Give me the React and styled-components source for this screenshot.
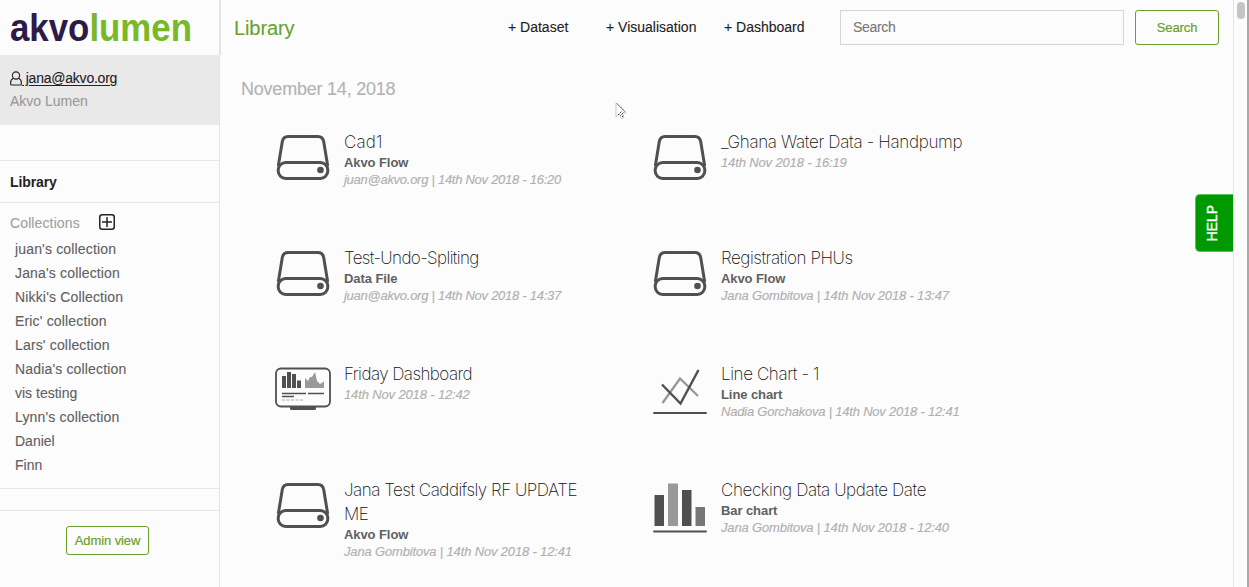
import React from "react";
import styled, { createGlobalStyle } from "styled-components";

const green = "#69a12e";

const GlobalStyle = createGlobalStyle`
  * { box-sizing: border-box; }
  html, body { margin: 0; padding: 0; overflow: hidden; background: #fcfcfc; }
  body { font-family: "Liberation Sans", Arial, sans-serif; font-size: 14px; color: #222; }
  button, input { font-family: inherit; }
`;

const Page = styled.div`
  position: relative;
  display: flex;
  width: 1249px;
  height: 587px;
  overflow: hidden;
  background: #fcfcfc;
`;

const Sidebar = styled.aside`
  display: flex;
  flex-direction: column;
  width: 220px;
  border-right: 1px solid #e4e4e4;
`;

const LogoArea = styled.div`
  height: 55px;
`;

const UserPanel = styled.div`
  height: 70px;
  padding: 12px 10px 0;
  background: #e9e9e9;
  line-height: 23px;
`;

const UserLink = styled.a`
  display: flex;
  align-items: center;
  height: 23px;
  color: #222;
  letter-spacing: -0.22px;
  -webkit-text-stroke: 0.1px;
`;

const UserName = styled.span`
  text-decoration: underline;
  text-underline-offset: 2px;
  white-space: pre;
`;

const Organisation = styled.div`
  color: #999;
  -webkit-text-stroke: 0.1px;
`;

const LibraryRow = styled.div`
  height: 43px;
  margin-top: 35px;
  padding-left: 10px;
  border-top: 1px solid #e6e6e6;
  border-bottom: 1px solid #e6e6e6;
  font-weight: bold;
  letter-spacing: -0.1px;
  line-height: 42px;
`;

const CollectionSection = styled.section`
  height: 286px;
  padding: 6px 10px 0;
  border-bottom: 1px solid #e6e6e6;
`;

const CollectionHeading = styled.div`
  display: flex;
  align-items: center;
  gap: 19px;
  height: 26px;
  margin-bottom: 2px;
  color: #a0a0a0;
  letter-spacing: 0.12px;
  -webkit-text-stroke: 0.1px;
`;

const HeadingLabel = styled.span`
  padding-top: 2px;
`;

const CollectionList = styled.ul`
  margin: 0;
  padding: 0 0 0 5px;
  list-style: none;
`;

const CollectionItem = styled.li`
  height: 24px;
  line-height: 24px;
  color: #606060;
  letter-spacing: ${(p) => (p.$short ? 0 : 0.16)}px;
  -webkit-text-stroke: 0.1px;
`;

const AdminArea = styled.div`
  flex: 1;
  margin-top: 21px;
  padding: 15px 0 0 66px;
  border-top: 1px solid #e6e6e6;
`;

const OutlineButton = styled.button`
  width: ${(p) => p.$width}px;
  height: ${(p) => p.$height}px;
  padding: 0;
  border: 1px solid ${green};
  border-radius: 3px;
  background: #fcfcfc;
  color: ${green};
  font-size: 13px;
  letter-spacing: -0.1px;
  white-space: nowrap;
  -webkit-text-stroke: 0.2px;
`;

const Main = styled.main`
  flex: 1;
  min-width: 0;
`;

const Header = styled.header`
  display: flex;
  align-items: center;
  height: 55px;
  padding-left: 13px;
  border-left: 1px solid #e4e4e4;
`;

const PageTitle = styled.h1`
  width: 274px;
  margin: 0;
  padding-top: 1px;
  color: ${green};
  font-size: 20px;
  font-weight: normal;
  letter-spacing: -0.1px;
  -webkit-text-stroke: 0.1px;
`;

const CreateLinks = styled.nav`
  display: flex;
  width: 332px;
  padding-bottom: 2px;
`;

const CreateLink = styled.a`
  width: ${(p) => p.$width}px;
  white-space: nowrap;
  -webkit-text-stroke: 0.1px;
`;

const SearchInput = styled.input`
  width: 284px;
  height: 35px;
  margin-right: 11px;
  padding: 0 12px 2px;
  border: 1px solid #d5d5d5;
  background: #fcfcfc;
  font-size: 14px;
  letter-spacing: -0.3px;
  outline: none;
  &::placeholder { color: #777; opacity: 1; -webkit-text-stroke: 0.1px; }
`;

const DateHeading = styled.h2`
  height: 24px;
  margin: 22px 0 29px 21px;
  color: #b2b2b2;
  font-size: 18px;
  font-weight: normal;
  letter-spacing: -0.22px;
  line-height: 24px;
  -webkit-text-stroke: 0.1px;
`;

const CardGrid = styled.div`
  display: grid;
  grid-template-columns: 377px 377px;
  grid-auto-rows: 116px;
  padding-left: 55px;
`;

const Card = styled.article`
  display: flex;
  gap: 13px;
`;

const CardText = styled.div`
  width: 250px;
`;

const CardTitle = styled.h3`
  margin: 0;
  color: #111;
  font-family: Inter, "Liberation Sans", sans-serif;
  font-size: 17px;
  font-weight: 200;
  line-height: 24px;
  letter-spacing: ${(p) => p.$tracking}px;
`;

const CardType = styled.div`
  color: #606060;
  font-size: 13px;
  font-weight: bold;
  letter-spacing: -0.08px;
  line-height: 17px;
`;

const CardMeta = styled.div`
  color: #b0b0b0;
  font-size: 13px;
  font-style: italic;
  letter-spacing: ${(p) => p.$tracking}px;
  line-height: 17px;
  white-space: nowrap;
  -webkit-text-stroke: 0.15px;
`;

const ScrollTrack = styled.div`
  width: 16px;
  padding: 2px 0 0 3px;
  border-left: 1px solid #e4e4e4;
  border-right: 2px solid #a9a9a9;
`;

const ScrollThumb = styled.div`
  width: 8px;
  height: 17px;
  border-radius: 4px;
  background: #c4c4c4;
`;

const HelpTab = styled.div`
  position: absolute;
  top: 194px;
  left: 1195px;
  display: flex;
  align-items: center;
  justify-content: center;
  width: 38px;
  height: 58px;
  padding-right: 5px;
  border: 1px solid #5cc05c;
  border-right: 0;
  border-radius: 5px 0 0 5px;
  background: #009900;
  color: #fff;
`;

const HelpLabel = styled.span`
  writing-mode: vertical-rl;
  transform: rotate(180deg);
  font-size: 14px;
  line-height: 16px;
  -webkit-text-stroke: 0.35px #fff;
`;

const Pointer = styled.svg`
  position: absolute;
  top: 102px;
  left: 615px;
`;

const Logo = () => (
  <svg width="219" height="55" fontFamily="Liberation Sans, Arial, sans-serif" fontSize="39" fontWeight="bold">
    <text x="10" y="41" textLength="182" lengthAdjust="spacingAndGlyphs">
      <tspan fill="#2c1a47">akvo</tspan><tspan fill="#79b829">lumen</tspan>
    </text>
  </svg>
);

const UserIcon = () => (
  <svg width="12" height="15" viewBox="0 0 12 15" fill="none" stroke="#222" strokeWidth="1.1">
    <circle cx="6" cy="4.5" r="3.6" />
    <path d="M3.5 7.3C1.5 8 .6 9.500.6 12v1q0 1 1 1h8.800q1 0 1-1v-1c0-2.500-.9-4-2.900-4.700" />
  </svg>
);

const PlusBoxIcon = () => (
  <svg width="16" height="16" viewBox="0 0 16 16" fill="none" stroke="#222" strokeWidth="1.5">
    <rect x=".75" y=".75" width="14.500" height="14.500" rx="2.500" />
    <path d="M8 3v10M3 8h10" />
  </svg>
);

const DriveIcon = () => (
  <svg width="56" height="56" viewBox="0 0 56 56" fill="none" stroke="#505050" strokeWidth="3">
    <path d="M3.300 36 7.300 11.500Q8.300 6.500 13 6.500H43Q47.700 6.500 48.700 11.500L52.700 36" />
    <rect x="3.200" y="32.500" width="49.600" height="16" rx="7.500" />
    <circle cx="45.500" cy="40" r="3.300" fill="#505050" stroke="none" />
  </svg>
);

const DashboardIcon = () => (
  <svg width="56" height="56" viewBox="0 0 56 56">
    <rect x="1" y="6.500" width="54" height="38" rx="5" fill="none" stroke="#505050" strokeWidth="1.800" />
    <path d="M15 45h26v1.500q0 1.500-1.500 1.500h-23Q15 48 15 46.500z" fill="#505050" />
    <path d="M7 14h4v12H7zM12 10h4v16h-4zM17 12h4v14h-4zM22 18.500h4V26h-4z" fill="#505050" />
    <path d="M30 26V16l3 3 2-4h2l3-5 2 9 3 3 4-2.500V26z" fill="#999" />
    <path d="M7 31.500h24M33 31.500h16M7 34.500h12" stroke="#505050" strokeWidth="1.400" />
    <path d="M7 38h21" stroke="#aaa" strokeWidth="1" strokeDasharray="3 1.500" />
  </svg>
);

const LineChartIcon = () => (
  <svg width="56" height="56" viewBox="0 0 56 56" fill="none" strokeWidth="2.400">
    <path d="M10.500 41 28 16.500 46 34" stroke="#999" />
    <path d="M10 22.500 28.500 41.500 46.500 8" stroke="#505050" />
    <path d="M2 51H54" stroke="#505050" strokeWidth="2" strokeLinecap="round" />
  </svg>
);

const BarChartIcon = () => (
  <svg width="56" height="56" viewBox="0 0 56 56">
    <path d="M2.500 17H12v31H2.500zM30 12h9.500v36H30z" fill="#505050" />
    <path d="M16 5.500h10V48H16z" fill="#999" />
    <path d="M43.500 29H53v19h-9.500z" fill="#777" />
    <path d="M2 53.500H54" stroke="#505050" strokeWidth="2" strokeLinecap="round" />
  </svg>
);

const icons = { drive: DriveIcon, dashboard: DashboardIcon, line: LineChartIcon, bar: BarChartIcon };

const collections = [
  "juan's collection", "Jana's collection", "Nikki's Collection", "Eric' collection", "Lars' collection",
  "Nadia's collection", "vis testing", "Lynn's collection", "Daniel", "Finn",
];

const cards = [
  { icon: "drive", title: "Cad1", type: "Akvo Flow", meta: "juan@akvo.org | 14th Nov 2018 - 16:20", tracking: 0.2, metaTracking: -0.27 },
  { icon: "drive", title: "_Ghana Water Data - Handpump", meta: "14th Nov 2018 - 16:19", tracking: -0.33, metaTracking: -0.14 },
  { icon: "drive", title: "Test-Undo-Spliting", type: "Data File", meta: "juan@akvo.org | 14th Nov 2018 - 14:37", tracking: -0.63, metaTracking: -0.27 },
  { icon: "drive", title: "Registration PHUs", type: "Akvo Flow", meta: "Jana Gombitova | 14th Nov 2018 - 13:47", tracking: -0.45, metaTracking: -0.16 },
  { icon: "dashboard", title: "Friday Dashboard", meta: "14th Nov 2018 - 12:42", tracking: -0.55, metaTracking: -0.14 },
  { icon: "line", title: "Line Chart - 1", type: "Line chart", meta: "Nadia Gorchakova | 14th Nov 2018 - 12:41", tracking: -0.4, metaTracking: -0.21 },
  { icon: "drive", title: "Jana Test Caddifsly RF UPDATE ME", type: "Akvo Flow", meta: "Jana Gombitova | 14th Nov 2018 - 12:41", tracking: -0.48, metaTracking: -0.16 },
  { icon: "bar", title: "Checking Data Update Date", type: "Bar chart", meta: "Jana Gombitova | 14th Nov 2018 - 12:40", tracking: -0.39, metaTracking: -0.16 },
];

const LibraryCard = ({ icon, title, type, meta, tracking, metaTracking }) => {
  const Icon = icons[icon];
  return (
    <Card>
      <Icon />
      <CardText>
        <CardTitle $tracking={tracking}>{title}</CardTitle>
        {type && <CardType>{type}</CardType>}
        <CardMeta $tracking={metaTracking}>{meta}</CardMeta>
      </CardText>
    </Card>
  );
};

export default function App() {
  return (
    <Page>
      <GlobalStyle />
      <Sidebar>
        <LogoArea><Logo /></LogoArea>
        <UserPanel>
          <UserLink><UserIcon /><UserName> jana@akvo.org</UserName></UserLink>
          <Organisation>Akvo Lumen</Organisation>
        </UserPanel>
        <LibraryRow>Library</LibraryRow>
        <CollectionSection>
          <CollectionHeading><HeadingLabel>Collections</HeadingLabel><PlusBoxIcon /></CollectionHeading>
          <CollectionList>
            {collections.map((name) => <CollectionItem key={name} $short={name.length < 12}>{name}</CollectionItem>)}
          </CollectionList>
        </CollectionSection>
        <AdminArea><OutlineButton $width={83} $height={29}>Admin view</OutlineButton></AdminArea>
      </Sidebar>
      <Main>
        <Header>
          <PageTitle>Library</PageTitle>
          <CreateLinks>
            <CreateLink $width={98}>+ Dataset</CreateLink>
            <CreateLink $width={118}>+ Visualisation</CreateLink>
            <CreateLink $width={116}>+ Dashboard</CreateLink>
          </CreateLinks>
          <SearchInput placeholder="Search" />
          <OutlineButton $width={84} $height={35}>Search</OutlineButton>
        </Header>
        <DateHeading>November 14, 2018</DateHeading>
        <CardGrid>
          {cards.map((card) => <LibraryCard key={card.title} {...card} />)}
        </CardGrid>
      </Main>
      <ScrollTrack><ScrollThumb /></ScrollTrack>
      <HelpTab><HelpLabel>HELP</HelpLabel></HelpTab>
      <Pointer width="12" height="18" viewBox="0 0 12 18">
        <path d="M1 1v14l3.300-3 2 4.500 2.500-1-1.800-4.500H11z" fill="#fff" stroke="#bbb" strokeWidth=".8" />
        <path d="M2 1.500 10 9.500M3 13l4-4M5.500 13.500l3-3M7 15l2-2" stroke="#333" strokeWidth="1" strokeDasharray="1.500 1" />
      </Pointer>
    </Page>
  );
}
